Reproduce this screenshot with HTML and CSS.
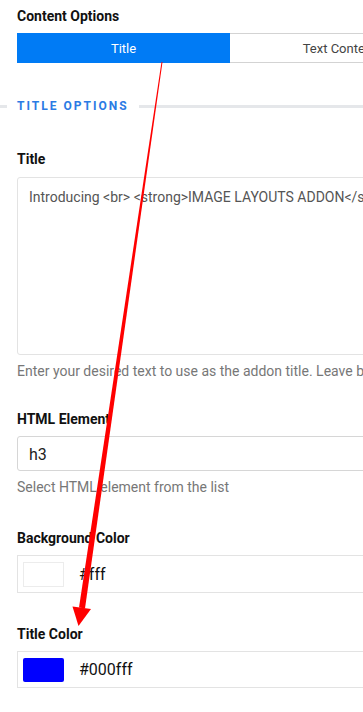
FILE: index.html
```html
<!DOCTYPE html>
<html lang="en">
<head>
    <meta charset="UTF-8">
    <meta name="viewport" content="width=device-width, initial-scale=1.0">
    <title>Title Options</title>
    <link rel="stylesheet" href="styles.css">
</head>
<body>
    <div class="panel">
        <h4 class="panel-heading">Content Options</h4>
        <div class="tabs">
            <div class="tab tab-active">Title</div>
            <div class="tab tab-wide">Text Content</div>
        </div>

        <div class="section-title"><span>Title Options</span></div>

        <div class="field field-first">
            <label class="field-label">Title</label>
            <div class="text-area">Introducing &lt;br&gt; &lt;strong&gt;IMAGE LAYOUTS ADDON&lt;/strong&gt;</div>
            <p class="help">Enter your desired text to use as the addon title. Leave blank to hide.</p>
        </div>

        <div class="field">
            <label class="field-label">HTML Element</label>
            <div class="select">h3</div>
            <p class="help">Select HTML element from the list</p>
        </div>

        <div class="field">
            <label class="field-label">Background Color</label>
            <div class="color-input">
                <span class="swatch swatch-white"></span>
                <span class="color-value">#fff</span>
            </div>
        </div>

        <div class="field">
            <label class="field-label">Title Color</label>
            <div class="color-input color-input-short">
                <span class="swatch swatch-blue"></span>
                <span class="color-value">#000fff</span>
            </div>
        </div>
    </div>

    <!-- annotation arrow drawn over the screenshot -->
    <svg class="annotation" width="363" height="712" viewBox="0 0 363 712">
        <polygon points="162.5,62 161.5,62 79,607.6 85,608.4" fill="#ff0000"/>
        <polygon points="72.5,606.5 91,609 78.5,626" fill="#ff0000"/>
    </svg>
</body>
</html>
```

FILE: styles.css
```css
body, html {
    margin: 0;
    padding: 0;
    background: #fff;
    font-family: 'Roboto', 'Liberation Sans', sans-serif;
    overflow: hidden;
}

.panel {
    width: 460px;
    padding-left: 17px;
}

.panel-heading {
    margin: 6px 0 0;
    font-size: 14px;
    line-height: 20px;
    font-weight: 700;
    color: #111;
}

.tabs {
    display: flex;
    margin-top: 7px;
    height: 30px;
}

.tab {
    width: 213px;
    box-sizing: border-box;
    display: flex;
    align-items: center;
    justify-content: center;
    font-size: 13px;
    color: #444;
    border: 1px solid #d3d3d3;
    border-left: none;
}

.tab-wide {
    width: 220px;
}

.tab-active {
    background-color: #007bf5;
    border: none;
    color: #fff;
}

.section-title {
    display: flex;
    align-items: center;
    margin: 35px 0 0 -17px;
    height: 16px;
}

.section-title::before,
.section-title::after {
    content: '';
    height: 3px;
    background-color: #e5e7ea;
}

.section-title::before {
    width: 7px;
}

.section-title::after {
    flex: 1;
}

.section-title span {
    padding: 0 10px;
    font-size: 12px;
    font-weight: 700;
    letter-spacing: 2px;
    text-transform: uppercase;
    color: #2a7be4;
}

.field {
    margin-top: 31px;
}

.field-first {
    margin-top: 35px;
}

.field-label {
    display: block;
    font-size: 14px;
    line-height: 20px;
    font-weight: 700;
    color: #111;
    margin-bottom: 8px;
}

.text-area {
    height: 178px;
    box-sizing: border-box;
    padding: 9px 11px;
    border: 1px solid #e3e3e3;
    border-radius: 3px;
    font-size: 14px;
    line-height: 20px;
    color: #555;
    white-space: nowrap;
    overflow: hidden;
}

.help {
    margin: 6px 0 0;
    font-size: 14px;
    line-height: 20px;
    color: #777;
    white-space: nowrap;
}

.field-first + .field {
    margin-top: 28px;
}

.field-first + .field .field-label {
    margin-bottom: 7px;
}

.select {
    height: 35px;
    box-sizing: border-box;
    display: flex;
    align-items: center;
    padding: 1px 11px 0;
    border: 1px solid #d6d6d6;
    border-radius: 3px;
    font-size: 16px;
    color: #222;
}

.color-input {
    height: 38px;
    box-sizing: border-box;
    display: flex;
    align-items: center;
    padding-left: 5px;
    border: 1px solid #e3e3e3;
    font-size: 16px;
    color: #111;
}

.color-input-short {
    height: 37px;
}

.field .color-input {
    margin-top: -1px;
}

.swatch {
    width: 41px;
    height: 25px;
    box-sizing: border-box;
    margin-right: 15px;
}

.swatch-white {
    background-color: #fff;
    border: 1px solid #ececec;
}

.swatch-blue {
    height: 24px;
    background-color: #0000ff;
    border-radius: 2px;
}

.annotation {
    position: absolute;
    left: 0;
    top: 0;
    pointer-events: none;
}
```
